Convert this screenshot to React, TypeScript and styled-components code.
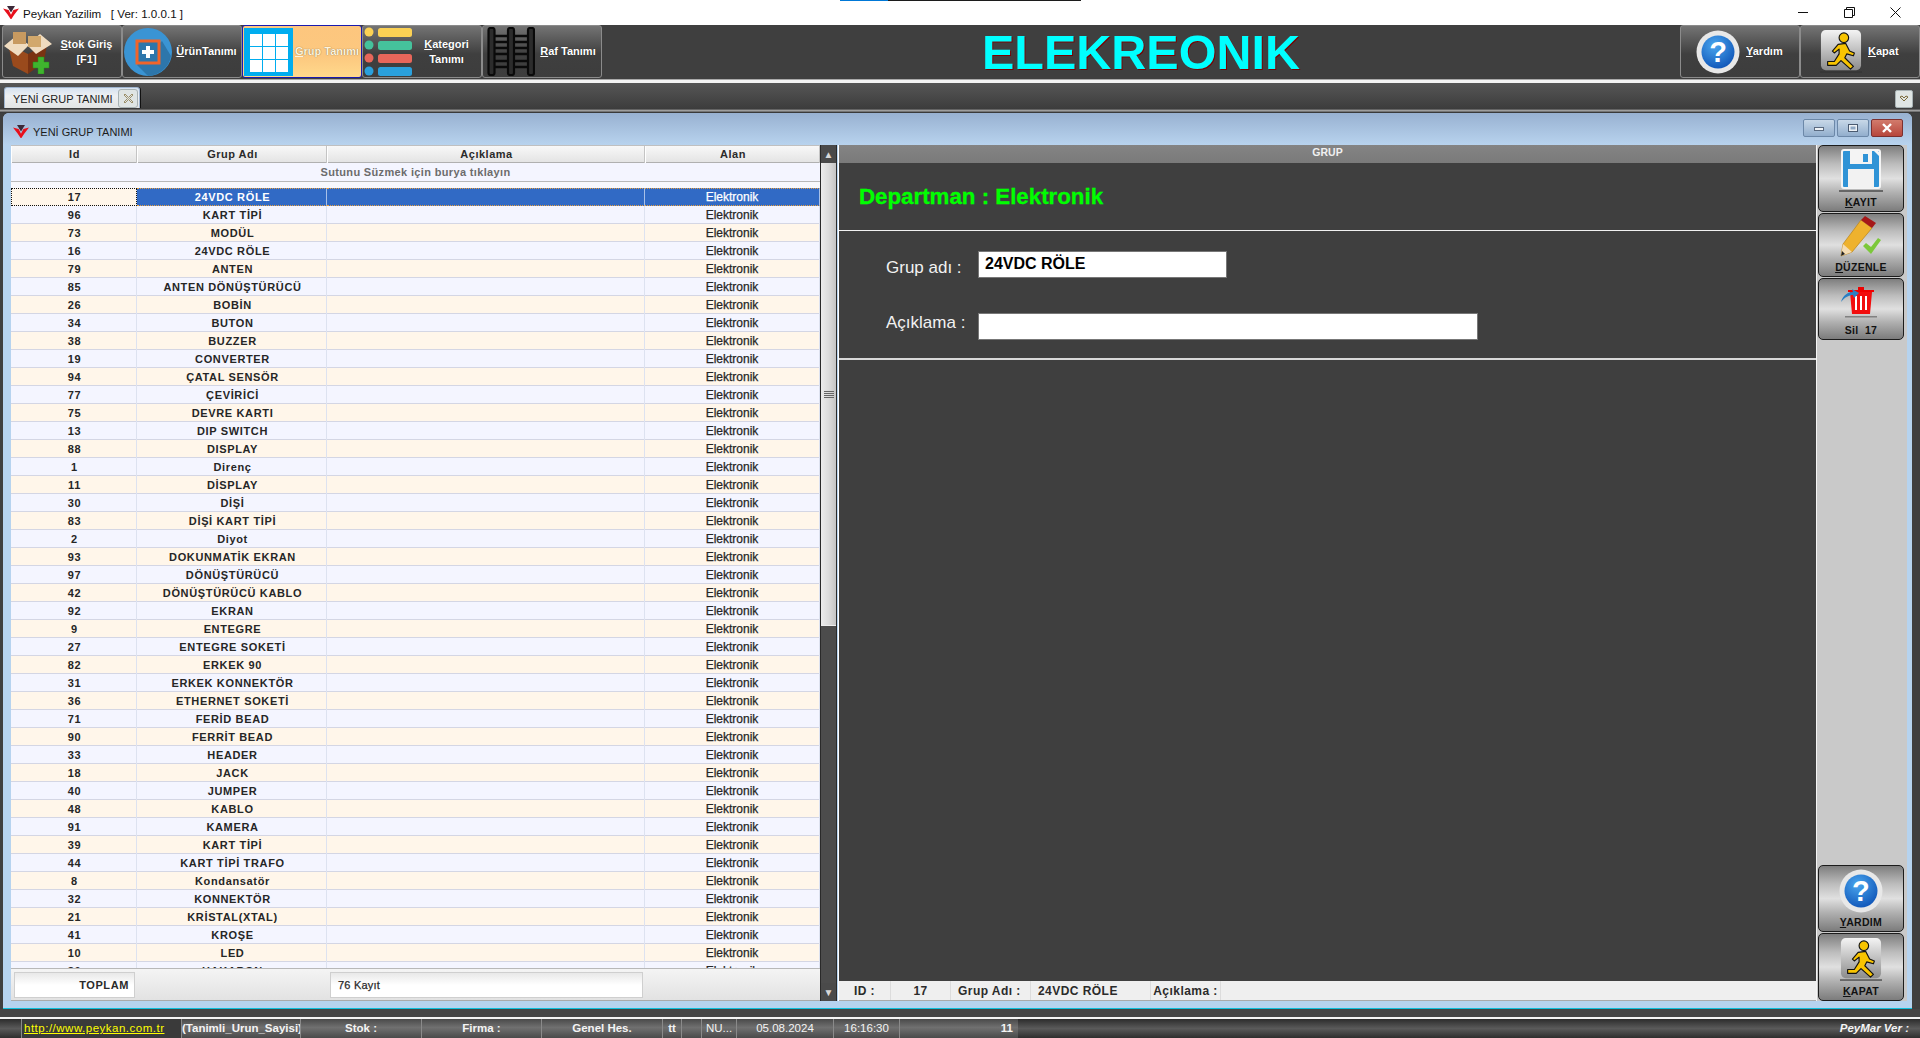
import React from "react";
import styled, { createGlobalStyle } from "styled-components";

const Global = createGlobalStyle`
  html, body { margin: 0; padding: 0; background: #3f3f3f; overflow: hidden; }
  * { box-sizing: border-box; }
  body { font-family: "Liberation Sans", Arial, sans-serif; }
`;

const Page = styled.div`
  position: relative; width: 1920px; height: 1038px; display: flex; flex-direction: column;
  overflow: hidden; background: #3f3f3f;
`;
const TopAccent = styled.div`
  position: absolute; top: 0; left: 840px; width: 241px; height: 1px;
  background: linear-gradient(90deg, #0078d7 0 48px, #1c1c1c 48px);
`;
const TitleBar = styled.header`
  height: 25px; background: #fff; display: flex; align-items: center; padding-left: 3px; flex: none;
`;
const TitleText = styled.span`
  font-size: 11.6px; color: #111; margin-left: 4px; white-space: pre; padding-top: 1px;
`;
const CaptionControls = styled.div` margin-left: auto; display: flex; margin-right: 2px; `;
const CaptionControl = styled.div` width: 46px; height: 25px; display: flex; align-items: center; justify-content: center; `;

const Toolbar = styled.nav` height: 54px; flex: none; background: #3f3f3f; display: flex; padding-left: 2px; `;
const ToolButton = styled.div<{ $active?: boolean; $pl?: number }>`
  width: 120px; height: 53px; flex: none; display: flex; align-items: center; padding-left: ${p => p.$pl ?? 1}px;
  border: 1px solid ${p => (p.$active ? "#1a1ab0" : "#8b8b8b")}; border-radius: 3px;
  background: ${p => p.$active
    ? "linear-gradient(#fdc67e 0%, #fcc87f 60%, #ffd98c 100%)"
    : "linear-gradient(#747474 0%, #595959 28%, #3f3f3f 55%, #3d3d3d 100%)"};
`;
const ToolLabel = styled.div<{ $active?: boolean; $flush?: boolean }>`
  flex: ${p => (p.$flush ? "none" : 1)}; margin-left: ${p => (p.$flush ? 6 : 0)}px; text-align: center;
  color: ${p => (p.$active ? "#fff4dc" : "#fff")}; font-size: 11px; font-weight: 700;
  line-height: 15px; white-space: nowrap; text-shadow: 0 0 1px rgba(0,0,0,.6);
`;
const Mn = styled.span` text-decoration: underline; `;
const Brand = styled.div`
  flex: 1; text-align: center; font-weight: 700; font-size: 48.5px; line-height: 53px; color: #00ffff;
  text-shadow: 1px 1px 0 #7a0000; padding-top: 1px;
`;

const Strip = styled.div` height: 4px; flex: none; background: linear-gradient(#a9a9a9 0 1px, #f4f4f4 1px); `;
const TabBar = styled.div`
  height: 30px; flex: none; display: flex; align-items: flex-end; padding-left: 4px; position: relative;
  background: linear-gradient(#565656 0, #3c3c3c 26px, #8c8c8c 27px, #b0b0b0 28px, #3a3a3a 29px);
  padding-bottom: 5px;
`;
const Tab = styled.div`
  width: 136px; height: 21px; display: flex; align-items: center; padding: 2px 0 0 8px; font-size: 11px; color: #222;
  background: linear-gradient(#d6e2f0, #eef0f2 40%, #e2e4e4); border: 1px solid #9fb5d0; border-bottom: none;
  border-radius: 3px 3px 0 0; box-shadow: 1px 0 0 #111; white-space: nowrap;
`;
const TabClose = styled.div`
  position: absolute; left: 118px; top: 6px; width: 20px; height: 19px; border: 1px solid #a8b2b4; border-radius: 3px;
  background: #dfe5e4; display: flex; align-items: center; justify-content: center;
`;
const TabMenu = styled.div`
  position: absolute; right: 7px; top: 7px; width: 18px; height: 18px; border: 1px solid #a8b2b4; border-radius: 2px;
  background: #dfe5e4; display: flex; align-items: center; justify-content: center;
`;

const WindowFrame = styled.section`
  height: 896px; flex: none; margin: 0 8px 0 3px; background: #b6d3ef; border-radius: 6px 6px 0 0;
  display: flex; flex-direction: column; border-bottom: 1px solid #10c0dc;
`;
const Caption = styled.div`
  height: 32px; flex: none; display: flex; align-items: center; padding: 5px 9px 0 10px; font-size: 11px; color: #1c1c1c;
  background: linear-gradient(#98b1d1, #b8d3ee); border-radius: 6px 6px 0 0; gap: 4px;
`;
const WinButtons = styled.div` margin-left: auto; display: flex; gap: 2px; margin-top: -7px; `;
const WinButton = styled.div<{ $close?: boolean }>`
  width: 32px; height: 18px; border-radius: 2px; display: flex; align-items: center; justify-content: center;
  border: 1px solid ${p => (p.$close ? "#7c3030" : "#6c88a8")};
  background: ${p => p.$close ? "linear-gradient(#d27b6c, #b7463c)" : "linear-gradient(#c8d8e8, #92aecd)"};
`;
const WinBody = styled.div` height: 856px; flex: none; display: flex; padding-left: 8px; `;

const GridArea = styled.div`
  width: 809px; height: 856px; flex: none; display: flex; flex-direction: column; background: #f4f5ff;
`;
const cols = "126px 190px 318px 175px";
const HeaderRow = styled.div`
  height: 18px; flex: none; display: grid; grid-template-columns: ${cols};
  background: linear-gradient(#f8f8f8, #e4e4e4); border-top: 1px solid #c0c0c0; border-bottom: 1px solid #b0b0b0;
`;
const HeaderCell = styled.div`
  text-align: center; font-size: 11px; font-weight: 700; color: #2a2a2a; line-height: 17px; letter-spacing: .5px;
  border-right: 1px solid #c4c4c4; border-left: 1px solid #fff; padding-left: 1px;
`;
const FilterRow = styled.div`
  height: 19px; flex: none; text-align: center; font-size: 11px; font-weight: 700; color: #6c6c6c; line-height: 18px;
  letter-spacing: .35px; border-bottom: 1px solid #b8b8b8;
`;
const Spacer6 = styled.div` height: 6px; flex: none; background: #f8f8fc; `;
const Rows = styled.div` flex: 1; min-height: 0; overflow: hidden; `;
const Row = styled.div<{ $odd: boolean }>`
  height: 18px; display: grid; grid-template-columns: ${cols}; background: ${p => (p.$odd ? "#fff6ea" : "#f4f5ff")};
  border-bottom: 1px solid #d4d6e4;
`;
const Cell = styled.div<{ $state?: "sel" | "focus" }>`
  text-align: center; font-size: 11px; font-weight: 700; color: #262626; letter-spacing: .65px; line-height: 18px;
  border-right: 1px solid #dde2f0; white-space: nowrap; padding-left: 2px;
  ${p => p.$state === "sel" && "background:#316ac5;color:#fff;border-top:1px dotted #e8a040;border-bottom:1px dotted #e8a040;border-right:1px solid #a8c0e8;margin-bottom:-1px;line-height:16px;"}
  ${p => p.$state === "focus" && "background:#fff6ea;outline:1px dotted #111;outline-offset:-1px;margin-bottom:-1px;"}
`;
const AreaCell = styled(Cell)`
  font-weight: 400; font-size: 12px; letter-spacing: 0; -webkit-text-stroke: .25px currentColor; padding-left: 0;
`;
const GridFooter = styled.div`
  height: 33px; flex: none; display: flex; align-items: center; padding-left: 3px;
  background: linear-gradient(#f4f4f4, #e2e2e2); border-top: 1px solid #b8b8b8; border-bottom: 1px solid #aaa;
`;
const FooterBox = styled.div<{ $w: number; $ml?: number; $right?: boolean }>`
  width: ${p => p.$w}px; margin-left: ${p => p.$ml ?? 0}px; height: 26px; border: 1px solid #cfcfcf; font-size: 11px;
  font-weight: ${p => (p.$right ? 700 : 400)}; color: #2a2a2a; line-height: 24px; padding: 0 5px 0 7px; letter-spacing: ${p => (p.$right ? ".6px" : ".2px")};
  text-align: ${p => (p.$right ? "right" : "left")}; background: linear-gradient(#e8e8e8, #fff 50%, #fff);
  -webkit-text-stroke: ${p => (p.$right ? "0" : ".25px #2a2a2a")};
`;

const ScrollTrack = styled.div`
  width: 17px; flex: none; background: #4c4c4c; display: flex; flex-direction: column; border-left: 1px solid #2a2a2a; border-right: 1px solid #2a2a2a;
`;
const ScrollArrow = styled.div`
  height: 18px; flex: none; background: #4a4a4a; color: #d8d8d8; font-size: 10px; display: flex; align-items: center; justify-content: center;
`;
const ScrollThumb = styled.div`
  height: 463px; flex: none; background: linear-gradient(90deg, #ececec, #dcdcdc 50%, #c4c4c4); border-bottom: 1px solid #eee;
  display: flex; flex-direction: column; align-items: center; padding-top: 228px; gap: 1px;
`;
const Grip = styled.div` width: 10px; height: 1px; background: #666; `;
const ScrollFill = styled.div` flex: 1; `;

const Panel = styled.div`
  width: 978px; flex: none; margin-left: 1px; background: #3f3f3f; display: flex; flex-direction: column;
  border-left: 1px solid #fff;
`;
const PanelHead = styled.div`
  height: 18px; flex: none; background: linear-gradient(#848484, #7a7a7a); color: #f0f0f0; text-align: center;
  font-size: 10.5px; font-weight: 700; line-height: 15px;
`;
const DeptSection = styled.div`
  height: 68px; flex: none; display: flex; align-items: center; padding-left: 20px; color: #00ff00;
  font-weight: 700; font-size: 22.3px; border-bottom: 1px solid #f2f2f2; -webkit-text-stroke: .3px #00ff00;
`;
const FormSection = styled.div`
  height: 129px; flex: none; display: grid; grid-template-columns: 83px 1fr; column-gap: 9px; row-gap: 35px;
  grid-auto-rows: 27px; padding: 20px 0 0 47px; border-bottom: 2px solid #d8d8d8; justify-items: start;
`;
const FieldLabel = styled.div<{ $dy: number }>`
  color: #f2f2f2; font-size: 17px; line-height: 27px; margin-top: ${p => p.$dy}px; white-space: nowrap;
`;
const Input = styled.div<{ $w: number }>`
  width: ${p => p.$w}px; height: 27px; background: #fff; border: 1px solid #777; padding-left: 6px; line-height: 23px;
  font-size: 16px; font-weight: 700; color: #000;
`;
const PanelFill = styled.div` flex: 1; `;
const InfoStrip = styled.div`
  height: 20px; flex: none; background: #efefef; border-bottom: 1px solid #aaa; display: flex; color: #2b2b2b;
  font-size: 12px; font-weight: 700; line-height: 20px;
`;
const InfoCell = styled.div<{ $w: number; $center?: boolean }>`
  width: ${p => p.$w}px; flex: none; border-right: 1px solid #dcdcdc; padding-left: ${p => (p.$center ? 0 : 7)}px;
  text-align: ${p => (p.$center ? "center" : "left")}; white-space: nowrap; letter-spacing: .45px;
`;

const Side = styled.aside`
  width: 91px; flex: none; background: #c9c9c9; border-left: 1px solid #f4f4f4; display: flex; flex-direction: column;
  padding: 0 3px 0 1px; gap: 1px;
`;
const SideFill = styled.div` flex: 1; `;
const SideButton = styled.div<{ $h: number }>`
  height: ${p => p.$h}px; flex: none; border: 1px solid #1c1c1c; border-radius: 5px; display: flex; flex-direction: column;
  align-items: center; background: linear-gradient(#7e7e7e 0%, #bdbdbd 28%, #e0e0e0 50%, #b0b0b0 72%, #7c7c7c 100%);
  font-size: 10.5px; font-weight: 700; color: #111; letter-spacing: .3px; justify-content: flex-end; padding-bottom: 3px; line-height: 12px;
`;
const SideIcon = styled.div` flex: 1; display: flex; align-items: center; justify-content: center; min-height: 0; `;

const DarkGap = styled.div` height: 8px; flex: none; background: #454545; `;
const WhiteLine = styled.div` height: 2px; flex: none; background: #f4f4f4; `;
const StatusBar = styled.footer`
  height: 19px; flex: none; display: flex; padding-left: 21px; color: #f4f4f4; font-size: 11.5px;
  background: linear-gradient(#2c2c2c, #5a5a5a 50%, #2e2e2e);
`;
const StatusCell = styled.div<{ $w: number; $link?: boolean; $right?: boolean; $reg?: boolean }>`
  width: ${p => p.$w}px; flex: none; text-align: ${p => (p.$right ? "right" : p.$link ? "left" : "center")}; line-height: 18px; white-space: nowrap; overflow: hidden;
  padding: 0 ${p => (p.$right ? 5 : 0)}px 0 ${p => (p.$link ? 2 : 0)}px;
  border-left: 1px solid #8a8a8a;
  color: ${p => (p.$link ? "#ffff00" : "#f4f4f4")};
  text-decoration: ${p => (p.$link ? "underline" : "none")};
  font-weight: ${p => (p.$link || p.$reg ? 400 : 700)};
  letter-spacing: ${p => (p.$link ? ".5px" : "0")};
  background: ${p => (p.$link ? "#3a3a3a" : "linear-gradient(#4a4a4a, #707070 45%, #4a4a4a)")};
`;
const StatusEnd = styled.div`
  margin-left: auto; padding-right: 11px; font-size: 11.5px; font-weight: 700; font-style: italic; line-height: 19px;
`;

const Logo = ({ s = 16 }: { s?: number }) => (
  <svg width={s} height={s * 0.85} viewBox="0 0 20 17">
    <path d="M0 3 L7 5 L10 11 L13 5 L20 3 L14 11 L10 17 L6 11Z" fill="#e8101c" />
    <path d="M5 0 H15 L10 8Z" fill="#3c2838" />
  </svg>
);

const BoxIcon = () => (
  <svg width="48" height="44" viewBox="0 0 48 44">
    <path d="M4 14 L24 24 L24 44 L9 36Z" fill="#9a4a1c" />
    <path d="M24 24 L43 14 L40 32 L24 44Z" fill="#7a3312" />
    <path d="M0 16 L12 6 L24 14 L36 4 L48 14 L32 24 L24 16 L14 26Z" fill="#f0dcc0" />
    <rect x="9" y="2" width="13" height="12" fill="#c89a60" />
    <rect x="24" y="6" width="13" height="11" fill="#d2a86c" />
    <path d="M29 32h5v-5h6v5h5v6h-5v6h-6v-6h-5z" fill="#3fb52e" stroke="#2a8a1c" strokeWidth=".5" />
  </svg>
);
const ProductIcon = () => (
  <svg width="48" height="48" viewBox="0 0 48 48">
    <circle cx="24" cy="24" r="24" fill="#3a94d4" />
    <path d="M38 13 L13 37 L24 48 A24 24 0 0 0 47 28Z" fill="#2d76ab" />
    <rect x="13" y="13" width="22" height="22" fill="#2d76ab" stroke="#f0642a" strokeWidth="3" />
    <path d="M22 18h4v4h4v4h-4v4h-4v-4h-4v-4h4z" fill="#fff" />
  </svg>
);
const GridIcon = () => (
  <svg width="49" height="48" viewBox="0 0 49 48">
    <rect width="49" height="48" fill="#00adef" />
    {[0, 1, 2].map(r => [0, 1, 2].map(c => (
      <rect key={`${r}${c}`} x={6 + c * 13} y={6 + r * 13} width="12" height="12" fill="#fff" />
    )))}
  </svg>
);
const CategoryIcon = () => (
  <svg width="48" height="49" viewBox="0 0 48 49">
    {[["#fbd154", 0], ["#45c29c", 13], ["#e8665a", 26], ["#2aa0dc", 39]].map(([c, y]) => (
      <g key={c as string}>
        <circle cx="5" cy={(y as number) + 5} r="4.5" fill={c as string} />
        <rect x="14" y={(y as number) + 1} width="34" height="9" rx="2.5" fill={c as string} />
      </g>
    ))}
  </svg>
);
const ShelfIcon = () => (
  <svg width="48" height="49" viewBox="0 0 48 49" fill="none" stroke="#0a0a0a">
    <g strokeWidth="2.2" fill="#2c2c2c">
      <rect x="1.5" y="1" width="6" height="47" rx="2" />
      <rect x="21" y="1" width="6" height="47" rx="2" />
      <rect x="41" y="1" width="6" height="47" rx="2" />
    </g>
    <g strokeWidth="2.5">
      {[9, 15, 21, 27, 34, 40].map(y => <path key={y} d={`M8 ${y}H21M27 ${y}H41`} />)}
    </g>
  </svg>
);
const HelpIcon = ({ s = 44 }: { s?: number }) => (
  <svg width={s} height={s} viewBox="0 0 44 44">
    <defs>
      <radialGradient id="helpb" cx=".4" cy=".3" r=".8"><stop offset="0" stopColor="#4aa6ee" /><stop offset="1" stopColor="#0b4fb4" /></radialGradient>
    </defs>
    <circle cx="22" cy="22" r="21.5" fill="#e8e8e8" />
    <circle cx="22" cy="22" r="16.5" fill="url(#helpb)" />
    <text x="22" y="32" textAnchor="middle" fontSize="29" fontWeight="700" fontFamily="Liberation Sans" fill="#fff">?</text>
  </svg>
);
const Runner = () => (
  <g fill="#f8c400" stroke="#111" strokeWidth="1.2" strokeLinejoin="round">
    <circle cx="25" cy="8" r="5" />
    <path d="M19 15 L27 14 L31 22 L36 24 L35 27 L28 25 L26 29 L35 38 L32 41 L22 32 L17 37 L8 37 L8 33 L15 33 L20 25 L20 20 L15 24 L13 22Z" />
  </g>
);
const RunnerTile = ({ w = 42, h = 44 }: { w?: number; h?: number }) => (
  <svg width={w} height={h} viewBox="0 0 44 46">
    <defs>
      <linearGradient id="tile" x1="0" y1="0" x2="0" y2="1"><stop offset="0" stopColor="#f4f4f4" /><stop offset="1" stopColor="#8c8c8c" /></linearGradient>
    </defs>
    <rect x="1" y="0" width="42" height="42" rx="5" fill="url(#tile)" />
    <rect x="0" y="43" width="44" height="2" fill="#333" opacity=".6" />
    <Runner />
  </svg>
);
const FloppyIcon = () => (
  <svg width="44" height="44" viewBox="0 0 44 44">
    <rect x="3" y="1" width="38" height="38" rx="2" fill="#2f93d6" stroke="#f4f4f4" strokeWidth="2" />
    <path d="M34 1 L41 8 V4 L38 1Z" fill="#f4f4f4" />
    <rect x="11" y="2" width="22" height="13" fill="#f4f4f4" />
    <rect x="24" y="5" width="5" height="8" fill="#2f93d6" />
    <rect x="9" y="20" width="26" height="19" fill="#f2f2f2" />
    <rect x="0" y="41" width="44" height="2" fill="#444" opacity=".7" />
  </svg>
);
const PencilIcon = () => (
  <svg width="42" height="44" viewBox="0 0 42 44">
    <path d="M23 30 L31 38 L41 24 L38 22 L31 31 L26 27Z" fill="#7cc83a" />
    <path d="M3 28 L21 4 L32 12 L12 36 L1 40Z" fill="#eeb22e" stroke="#b88318" strokeWidth=".7" />
    <path d="M21 4 L25 0 L36 7 L32 12Z" fill="#a51818" />
    <path d="M3 28 L12 36 L1 40Z" fill="#f4dcb4" />
    <path d="M2 35 L5 38 L1 40Z" fill="#222" />
  </svg>
);
const TrashIcon = () => (
  <svg width="40" height="34" viewBox="0 0 40 34">
    <path d="M9 7h22l-2 22h-18z" fill="#f20d0d" />
    <path d="M15 11v14M20 11v14M25 11v14" stroke="#fff" strokeWidth="2" />
    <path d="M7 5h26v2H7zM17 2h6v3h-6z" fill="#e00" />
    <path d="M0 17 C2 10 7 7 12 7 L11 4 L18 8 L13 13 L12 10 C8 10 4 12 0 17Z" fill="#2a7fc4" />
    <rect x="4" y="31" width="32" height="1.5" fill="#555" opacity=".6" />
  </svg>
);

const data: [string, string][] = [
  ["17", "24VDC RÖLE"], ["96", "KART TİPİ"], ["73", "MODÜL"], ["16", "24VDC RÖLE"], ["79", "ANTEN"],
  ["85", "ANTEN DÖNÜŞTÜRÜCÜ"], ["26", "BOBİN"], ["34", "BUTON"], ["38", "BUZZER"], ["19", "CONVERTER"],
  ["94", "ÇATAL SENSÖR"], ["77", "ÇEVİRİCİ"], ["75", "DEVRE KARTI"], ["13", "DIP SWITCH"], ["88", "DISPLAY"],
  ["1", "Direnç"], ["11", "DİSPLAY"], ["30", "DİŞİ"], ["83", "DİŞİ KART TİPİ"], ["2", "Diyot"],
  ["93", "DOKUNMATİK EKRAN"], ["97", "DÖNÜŞTÜRÜCÜ"], ["42", "DÖNÜŞTÜRÜCÜ KABLO"], ["92", "EKRAN"], ["9", "ENTEGRE"],
  ["27", "ENTEGRE SOKETİ"], ["82", "ERKEK 90"], ["31", "ERKEK KONNEKTÖR"], ["36", "ETHERNET SOKETİ"], ["71", "FERİD BEAD"],
  ["90", "FERRİT BEAD"], ["33", "HEADER"], ["18", "JACK"], ["40", "JUMPER"], ["48", "KABLO"],
  ["91", "KAMERA"], ["39", "KART TİPİ"], ["44", "KART TİPİ TRAFO"], ["8", "Kondansatör"], ["32", "KONNEKTÖR"],
  ["21", "KRİSTAL(XTAL)"], ["41", "KROŞE"], ["10", "LED"], ["80", "HAKARON"],
];

export default function App() {
  return (
    <Page>
      <Global />
      <TopAccent />
      <TitleBar>
        <Logo />
        <TitleText>{"Peykan Yazilim   [ Ver: 1.0.0.1 ]"}</TitleText>
        <CaptionControls>
          <CaptionControl><svg width="11" height="11"><path d="M0 5.5H10" stroke="#111" /></svg></CaptionControl>
          <CaptionControl><svg width="11" height="11" fill="none" stroke="#111"><path d="M.5 2.5h8v8h-8zM2.5 2.5v-2h8v8h-2" /></svg></CaptionControl>
          <CaptionControl><svg width="11" height="11" stroke="#111"><path d="M.5.5l10 10M10.5.5l-10 10" /></svg></CaptionControl>
        </CaptionControls>
      </TitleBar>

      <Toolbar>
        <ToolButton><BoxIcon /><ToolLabel><Mn>S</Mn>tok Giriş<br />[F1]</ToolLabel></ToolButton>
        <ToolButton><ProductIcon /><ToolLabel><Mn>Ü</Mn>rünTanımı</ToolLabel></ToolButton>
        <ToolButton $active><GridIcon /><ToolLabel $active><Mn>G</Mn>rup Tanımı</ToolLabel></ToolButton>
        <ToolButton><CategoryIcon /><ToolLabel><Mn>K</Mn>ategori<br />Tanımı</ToolLabel></ToolButton>
        <ToolButton $pl={4}><ShelfIcon /><ToolLabel><Mn>R</Mn>af Tanımı</ToolLabel></ToolButton>
        <Brand>ELEKREONIK</Brand>
        <ToolButton $pl={15}><HelpIcon /><ToolLabel $flush><Mn>Y</Mn>ardım</ToolLabel></ToolButton>
        <ToolButton $pl={19}><RunnerTile /><ToolLabel $flush><Mn>K</Mn>apat</ToolLabel></ToolButton>
      </Toolbar>
      <Strip />
      <TabBar>
        <Tab>YENİ GRUP TANIMI</Tab>
        <TabClose><svg width="11" height="11" fill="none" stroke="#8a7a4a" strokeWidth=".8"><path d="M2 1l3.5 3.5L9 1l1 1-3.5 3.5L10 9l-1 1-3.5-3.5L2 10l-1-1 3.5-3.5L1 2z" /></svg></TabClose>
        <TabMenu><svg width="10" height="8" fill="none" stroke="#7a6a3a"><path d="M1 2l4 4 4-4-2-1-2 2-2-2z" /></svg></TabMenu>
      </TabBar>

      <WindowFrame>
        <Caption>
          <Logo />
          YENİ GRUP TANIMI
          <WinButtons>
            <WinButton><svg width="10" height="6"><rect x=".5" y="2.5" width="9" height="3" fill="#eef2f6" stroke="#5a6a80" /></svg></WinButton>
            <WinButton><svg width="10" height="8"><rect x=".5" y=".5" width="9" height="7" fill="#eef2f6" stroke="#4a5a70" /><rect x="2.5" y="2.5" width="5" height="3" fill="#8fa8c4" /></svg></WinButton>
            <WinButton $close><svg width="12" height="10" stroke="#fff" strokeWidth="2.4"><path d="M2 1l8 8M10 1l-8 8" /></svg></WinButton>
          </WinButtons>
        </Caption>
        <WinBody>
          <GridArea>
            <HeaderRow>
              <HeaderCell>Id</HeaderCell><HeaderCell>Grup Adı</HeaderCell><HeaderCell>Açıklama</HeaderCell><HeaderCell>Alan</HeaderCell>
            </HeaderRow>
            <FilterRow>Sutunu Süzmek için burya tıklayın</FilterRow>
            <Spacer6 />
            <Rows>
              {data.map(([id, name], i) => (
                <Row key={i} $odd={i % 2 === 0}>
                  <Cell $state={i === 0 ? "focus" : undefined}>{id}</Cell>
                  <Cell $state={i === 0 ? "sel" : undefined}>{name}</Cell>
                  <Cell $state={i === 0 ? "sel" : undefined} />
                  <AreaCell $state={i === 0 ? "sel" : undefined}>Elektronik</AreaCell>
                </Row>
              ))}
            </Rows>
            <GridFooter>
              <FooterBox $w={121} $right>TOPLAM</FooterBox>
              <FooterBox $w={313} $ml={195}>76 Kayıt</FooterBox>
            </GridFooter>
          </GridArea>
          <ScrollTrack>
            <ScrollArrow>▲</ScrollArrow>
            <ScrollThumb><Grip /><Grip /><Grip /><Grip /></ScrollThumb>
            <ScrollFill />
            <ScrollArrow>▼</ScrollArrow>
          </ScrollTrack>
          <Panel>
            <PanelHead>GRUP</PanelHead>
            <DeptSection>Departman : Elektronik</DeptSection>
            <FormSection>
              <FieldLabel $dy={3}>Grup adı :</FieldLabel>
              <Input $w={249}>24VDC RÖLE</Input>
              <FieldLabel $dy={-4}>Açıklama :</FieldLabel>
              <Input $w={500} />
            </FormSection>
            <PanelFill />
            <InfoStrip>
              <InfoCell $w={52} $center>ID :</InfoCell>
              <InfoCell $w={60} $center>17</InfoCell>
              <InfoCell $w={80}>Grup Adı :</InfoCell>
              <InfoCell $w={120}>24VDC RÖLE</InfoCell>
              <InfoCell $w={70} $center>Açıklama :</InfoCell>
            </InfoStrip>
          </Panel>
          <Side>
            <SideButton $h={67}><SideIcon><FloppyIcon /></SideIcon><span><Mn>K</Mn>AYIT</span></SideButton>
            <SideButton $h={64}><SideIcon><PencilIcon /></SideIcon><span><Mn>D</Mn>ÜZENLE</span></SideButton>
            <SideButton $h={62}><SideIcon><TrashIcon /></SideIcon><span>Sil&nbsp; 17</span></SideButton>
            <SideFill />
            <SideButton $h={67}><SideIcon><HelpIcon s={44} /></SideIcon><span><Mn>Y</Mn>ARDIM</span></SideButton>
            <SideButton $h={68}><SideIcon><RunnerTile w={42} h={44} /></SideIcon><span><Mn>K</Mn>APAT</span></SideButton>
          </Side>
        </WinBody>
      </WindowFrame>
      <DarkGap />
      <WhiteLine />
      <StatusBar>
        <StatusCell $w={160} $link>http://www.peykan.com.tr</StatusCell>
        <StatusCell $w={119}>(Tanimli_Urun_Sayisi)</StatusCell>
        <StatusCell $w={121}>Stok :</StatusCell>
        <StatusCell $w={120}>Firma :</StatusCell>
        <StatusCell $w={121}>Genel Hes.</StatusCell>
        <StatusCell $w={19}>tt</StatusCell>
        <StatusCell $w={20} />
        <StatusCell $w={35} $reg>NU...</StatusCell>
        <StatusCell $w={97} $reg>05.08.2024</StatusCell>
        <StatusCell $w={66} $reg>16:16:30</StatusCell>
        <StatusCell $w={119} $right>11</StatusCell>
        <StatusEnd>PeyMar Ver :</StatusEnd>
      </StatusBar>
    </Page>
  );
}
